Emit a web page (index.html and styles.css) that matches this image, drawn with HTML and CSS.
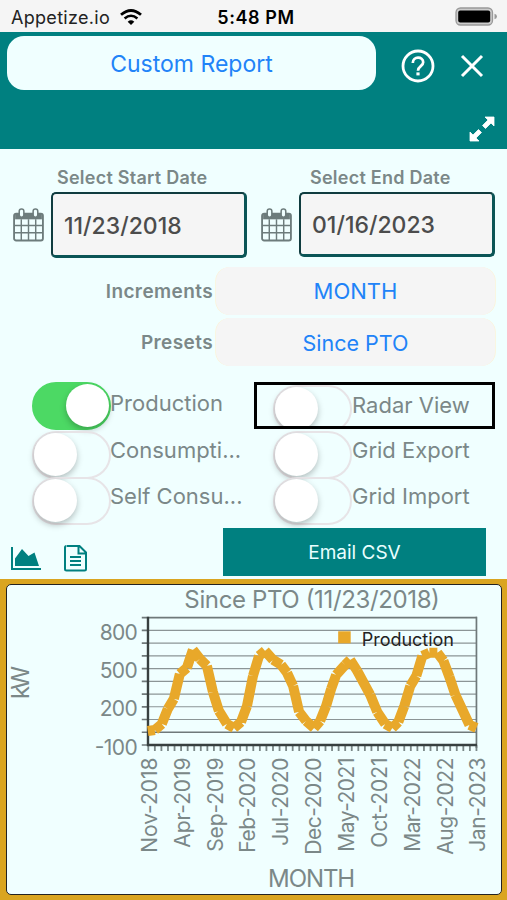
FILE: index.html
```
<!DOCTYPE html>
<html lang="en">
<head>
    <meta charset="UTF-8">
    <meta name="viewport" content="width=device-width, initial-scale=1.0">
    <title>Custom Report</title>
    <link rel="stylesheet" href="styles.css">
</head>
<body>
    <div class="statusbar">
        <span class="carrier">Appetize.io
            <svg class="wifi" width="22" height="17" viewBox="0 0 22 17">
                <path d="M1 5.8 Q11 -2.8 21 5.8" fill="none" stroke="#000" stroke-width="2.8"/>
                <path d="M4.6 9.5 Q11 4 17.4 9.5" fill="none" stroke="#000" stroke-width="2.6"/>
                <path d="M11 16 L7.7 12.7 Q11 9.8 14.3 12.7 Z"/>
            </svg>
        </span>
        <span class="time">5:48 PM</span>
        <svg class="battery" width="43" height="20" viewBox="0 0 43 20">
            <rect x="1" y="1" width="36.5" height="17" rx="4.5" fill="#ccc" stroke="#999" stroke-width="1.3"/>
            <rect x="3.2" y="3.5" width="32" height="12" rx="2"/>
            <path d="M39.5 6.8 Q42 7.5 42 9.5 Q42 11.5 39.5 12.2 Z" fill="#999"/>
        </svg>
    </div>

    <header>
        <div class="topline">
            <button class="report-btn">Custom Report</button>
            <svg class="help" width="34" height="34" viewBox="0 0 34 34" fill="none" stroke="#fff">
                <circle cx="17" cy="17" r="15" stroke-width="2.8"/>
                <path d="M11.8 14 C11.8 7 22.2 7 22.2 13.3 C22.2 17.2 17 17.2 17 21.8" stroke-width="2.7"/>
                <path d="M17 23.4 V26.4" stroke-width="3.2"/>
            </svg>
            <svg class="close" width="24" height="24" viewBox="0 0 24 24">
                <path d="M2 2 L22 22 M22 2 L2 22" stroke="#fff" stroke-width="3"/>
            </svg>
        </div>
        <svg class="expand" width="26" height="26" viewBox="0 0 26 26" fill="#fff" stroke="#fff">
            <path d="M16 1 H25 V10 L22 7 L16.5 12.5 L13.5 9.5 L19 4 Z M10 25 H1 V16 L4 19 L9.5 13.5 L12.5 16.5 L7 22 Z" stroke-width="0.8"/>
        </svg>
    </header>

    <div class="dates">
        <svg class="calendar" viewBox="0 0 30 33"><use href="#cal"/></svg>
        <div class="date start">
            <label>Select Start Date</label>
            <div class="date-box">11/23/2018</div>
        </div>
        <svg class="calendar second" viewBox="0 0 30 33"><use href="#cal"/></svg>
        <div class="date end">
            <label>Select End Date</label>
            <div class="date-box">01/16/2023</div>
        </div>
    </div>

    <div class="options">
        <label class="increments">Increments</label>
        <button class="option-btn month">MONTH</button>
        <label class="presets">Presets</label>
        <button class="option-btn pto">Since PTO</button>
    </div>

    <div class="switches">
        <div class="item first"><span class="switch on"></span><span class="name">Production</span></div>
        <div class="item radar"><span class="switch"></span><span class="name">Radar View</span></div>
        <div class="item"><span class="switch"></span><span class="name">Consumpti...</span></div>
        <div class="item right"><span class="switch"></span><span class="name">Grid Export</span></div>
        <div class="item"><span class="switch"></span><span class="name">Self Consu...</span></div>
        <div class="item right"><span class="switch"></span><span class="name">Grid Import</span></div>
    </div>

    <div class="actions">
        <svg class="area" width="31" height="24" viewBox="0 0 31 24" fill="#008080">
            <path d="M0 0 H2 V21 H30 V23 H0 Z"/>
            <path d="M4 19 V11.5 L11 2 L17.5 9 L23.5 5.5 L28 19 Z"/>
        </svg>
        <svg class="doc" width="24" height="27" viewBox="0 0 24 27" fill="none" stroke="#008080" stroke-width="2">
            <path d="M3 1 H15.5 L22 7.5 V24 Q22 25.5 20.5 25.5 H2.5 Q1 25.5 1 24 V2.5 Q1 1 2.5 1 M14.5 1 V8.5 H22 M6 12 H17 M6 16 H17 M6 20 H17"/>
        </svg>
        <button class="csv-btn">Email CSV</button>
    </div>

    <div class="chart-frame">
        <svg class="chart" viewBox="7.5 585.5 493 308">
            <g id="grid"></g>
            <path id="series" fill="none" stroke="#e8a82a" stroke-width="10"/>
            <rect x="338" y="631.5" width="12.5" height="12" fill="#e8a82a"/>
            <text class="legend" x="361.5" y="646.5" textLength="92">Production</text>
            <text class="title" x="184.5" y="608" textLength="255">Since PTO (11/23/2018)</text>
            <text class="title" x="268" y="886.5" textLength="87">MONTH</text>
            <text class="title" transform="translate(29.5 699) rotate(-90)" textLength="33">kW</text>
            <g id="labels"></g>
        </svg>
    </div>

    <svg width="0" height="0" class="defs">
        <symbol id="cal" viewBox="0 0 30 33">
            <path d="M2 5 H28 V11 H2 Z" fill="#6d7c7c"/>
            <rect x="1" y="5.5" width="28" height="26" rx="2" fill="none" stroke="#6d7c7c" stroke-width="1.8"/>
            <path d="M1 17 H29 M1 24 H29 M8 11 V31 M15 11 V31 M22 11 V31" stroke="#6d7c7c" stroke-width="1.4"/>
            <rect x="6" y="1" width="4.5" height="8" rx="2.2" fill="#f0ffff" stroke="#6d7c7c" stroke-width="1.5"/>
            <rect x="19.5" y="1" width="4.5" height="8" rx="2.2" fill="#f0ffff" stroke="#6d7c7c" stroke-width="1.5"/>
        </symbol>
    </svg>

    <script>
        // one [x, y] point per month, Nov-2018 to Jan-2023
        const points = [
            [148,731],[155,730],[162,724],[168,709],[174,699],[180,674],[187,668],[193,650],[200,659],[207,666],
            [213,692],[219,711],[227,724],[234,728],[241,722],[247,706],[253,676],[259,656],[265,651],[273,660],
            [281,665],[287,673],[293,686],[299,712],[306,721],[314,728],[320,721],[326,706],[331,689],[336,675],
            [345,665],[350,660],[357,671],[364,684],[370,695],[377,712],[385,724],[392,728],[398,722],[404,706],
            [410,686],[416,676],[422,656],[429,653],[437,653],[443,661],[449,677],[455,695],[462,710],[469,725],[476,728]
        ];
        let d = '';
        for (let i = 1; i < points.length; i++) {
            d += 'M' + points[i - 1].join(' ') + 'L' + points[i].join(' ');
        }
        document.getElementById('series').setAttribute('d', d);

        let grid = '';
        for (let i = 0; i <= 10; i++) {
            const y = 617.8 + i * 12.72;
            const cls = i === 0 || i === 9 ? 'line strong' : 'line';
            grid += `<path class="${cls}" d="M148 ${y}H476.5"/><path class="line strong" d="M142 ${y}H148"/>`;
        }
        for (let i = 0; i <= 50; i++) {
            const x = 148.5 + i * 6.55;
            grid += `<path class="tick" d="M${x} 745V751"/>`;
        }
        grid += '<path class="line strong" d="M476 617V748"/><path class="axis" d="M148.2 617V745H476.5"/>';
        document.getElementById('grid').innerHTML = grid;

        // [text, y, width]
        const yLabels = [['800', 640.5, 38], ['500', 678.5, 38], ['200', 716.5, 38], ['-100', 754.5, 43]];
        const xLabels = [['Nov-2018', 95], ['Apr-2019', 90], ['Sep-2019', 94], ['Feb-2020', 95], ['Jul-2020', 88], ['Dec-2020', 97],
            ['May-2021', 94], ['Oct-2021', 90], ['Mar-2022', 94], ['Aug-2022', 97], ['Jan-2023', 94]];
        let labels = '';
        yLabels.forEach(([t, y, w]) => {
            labels += `<text class="label" x="${138 - w}" y="${y}" textLength="${w}">${t}</text>`;
        });
        xLabels.forEach(([t, w], i) => {
            labels += `<text class="label" transform="translate(${157 + i * 32.8} ${757.5 + w}) rotate(-90)" textLength="${w}">${t}</text>`;
        });
        document.getElementById('labels').innerHTML = labels;
    </script>
</body>
</html>
```
FILE: styles.css
```
* {
    box-sizing: border-box;
}
body {
    margin: 0;
    width: 507px;
    height: 900px;
    overflow: hidden;
    background-color: #f0ffff;
    font-family: Inter, "Liberation Sans", sans-serif;
    color: #7b8888;
}
button {
    border: none;
    padding: 0;
    font-family: inherit;
    color: #2183f8;
    white-space: nowrap;
}
.statusbar {
    display: grid;
    grid-template-columns: 1fr auto 1fr;
    align-items: center;
    height: 32px;
    padding: 2px 9px 0 11px;
    background-color: #f5f5f5;
    color: #000;
    font-size: 18px;
}
.carrier {
    display: flex;
    align-items: center;
    gap: 10px;
    color: #222;
    letter-spacing: 0.3px;
}
.time {
    padding-left: 3px;
    font-weight: 600;
    font-size: 18px;
    letter-spacing: 0.6px;
}
.battery {
    justify-self: end;
}
header {
    height: 117px;
    padding: 4px 12px 0 7px;
    background-color: #008080;
}
.topline {
    display: flex;
    align-items: center;
    height: 54px;
}
.report-btn {
    width: 369px;
    height: 54px;
    padding-top: 2px;
    border-radius: 17px;
    background-color: #f0ffff;
    font-size: 23px;
}
.help {
    margin: 5px 0 0 25px;
}
.close {
    margin: 5px 0 0 25px;
}
.expand {
    display: block;
    margin: 26px 0 0 auto;
}
.dates {
    display: flex;
    height: 108px;
    padding: 17px 12px 0 13px;
}
.calendar {
    width: 31px;
    height: 34px;
    margin: 42px 7px 0 0;
}
.calendar.second {
    margin-left: 14px;
}
.date {
    width: 196px;
}
.date label {
    display: block;
    height: 26px;
    padding-left: 6px;
    line-height: 24px;
    font-size: 18px;
    font-weight: 600;
    letter-spacing: 0.25px;
    white-space: nowrap;
}
.date.end label {
    padding-left: 11px;
}
.date-box {
    height: 66px;
    padding-left: 11px;
    border: 2px solid #103c3f;
    border-right: 3px solid #0b5556;
    border-bottom: 3px solid #0b5556;
    border-radius: 5px;
    background-color: #f5f5f5;
    color: #4c4c4c;
    font-size: 23px;
    font-weight: 500;
    line-height: 65px;
}
.end .date-box {
    height: 65px;
    line-height: 62px;
}
.options {
    display: grid;
    grid-template-columns: 213px 279px;
    column-gap: 3px;
    row-gap: 3px;
    padding-top: 10px;
}
.options label {
    text-align: right;
    font-size: 19px;
    font-weight: 600;
    letter-spacing: 0.4px;
    line-height: 50px;
    height: 48px;
}
.option-btn {
    height: 48px;
    border-radius: 14px;
    background-color: #f5f5f5;
    box-shadow: 1px 0 0 -0.3px #fdf2d4, -1px 0 0 -0.3px #fdf2d4;
    font-size: 22px;
}
.pto {
    padding-top: 2px;
    font-size: 21.5px;
}
.switches {
    display: grid;
    grid-template-columns: 222px 241px;
    grid-template-rows: 49px 46px 46px;
    padding: 16px 0 0 32px;
    font-size: 22px;
}
.item {
    display: flex;
    white-space: nowrap;
}
.item.right {
    padding-left: 19px;
}
.radar {
    height: 47px;
    padding-left: 16px;
    border: 3px solid #000;
    overflow: hidden;
}
.switch {
    width: 79px;
    height: 48px;
    flex: none;
    margin-right: -1px;
    border: 2px solid #e7e4e7;
    border-radius: 24px;
}
.switch::before {
    content: "";
    display: block;
    width: 43px;
    height: 43px;
    border-radius: 50%;
    background-color: #fff;
    box-shadow: 0 3px 6px rgba(0,0,0,0.25);
}
.switch.on {
    border-color: #4cd964;
    background-color: #4cd964;
    padding-left: 32px;
}
.name {
    line-height: 39px;
}
.first .name {
    line-height: 43px;
}
.radar .name,
.right .name {
    padding-left: 1px;
}
.radar .name {
    line-height: 40px;
}
.actions {
    display: flex;
    height: 56px;
    padding-left: 11px;
}
.area {
    margin-top: 24px;
}
.doc {
    margin: 22px 0 0 22px;
}
.csv-btn {
    width: 263px;
    height: 48px;
    margin: 5px 0 0 135px;
    background-color: #008080;
    color: #e9ffff;
    font-size: 19px;
}
.chart-frame {
    height: 321px;
    padding: 5px 5px 5px 6px;
    background-color: #daa520;
}
.chart {
    display: block;
    width: 496px;
    height: 311px;
    border: 1.5px solid #222;
    border-radius: 5px;
    background-color: #f0ffff;
}
.chart text {
    fill: #7b8888;
}
.chart .title {
    font-size: 24px;
}
.chart .label {
    font-size: 21px;
}
.chart .legend {
    font-size: 18px;
    fill: #222;
}
.line {
    stroke: #8b9596;
    stroke-width: 1.2;
}
.line.strong {
    stroke: #6f797a;
    stroke-width: 1.7;
}
.tick {
    stroke: #7b8888;
    stroke-width: 1.8;
}
.axis {
    fill: none;
    stroke: #384040;
    stroke-width: 2.4;
}
.defs {
    display: block;
}
```
